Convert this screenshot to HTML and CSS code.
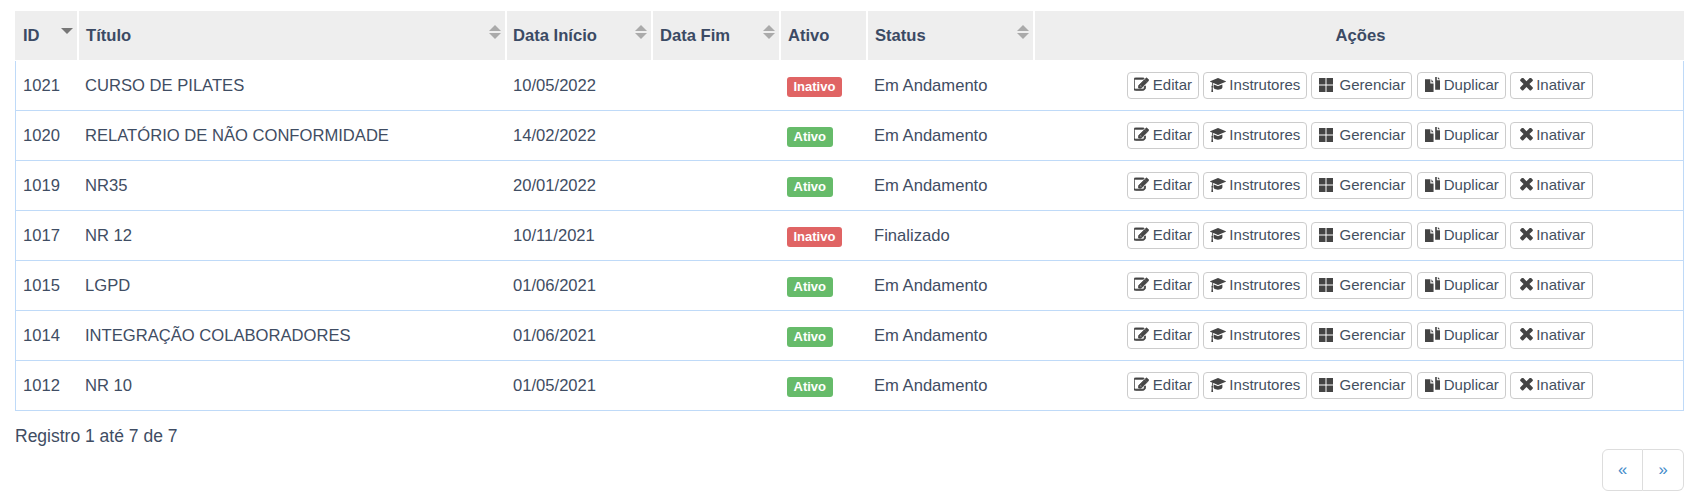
FILE: index.html
```html
<!DOCTYPE html>
<html lang="pt-BR">
<head>
<meta charset="utf-8">
<title>Cursos</title>
<link rel="stylesheet" href="styles.css">
</head>
<body>
<svg class="sprite" xmlns="http://www.w3.org/2000/svg" width="0" height="0">
  <symbol id="i-edit" viewBox="100 150 1720 1440"><path d="M888 1184l116-116-152-152-116 116v56h96v96h56zm440-720q-16-16-33 1l-350 350q-17 17-1 33t33-1l350-350q17-17 1-33zm80 594v190q0 119-84.5 203.5t-203.5 84.5h-832q-119 0-203.5-84.5t-84.5-203.5v-832q0-119 84.5-203.5t203.5-84.5h832q63 0 117 25 15 7 18 23 3 17-9 29l-49 49q-14 14-32 8-23-6-45-6h-832q-66 0-113 47t-47 113v832q0 66 47 113t113 47h832q66 0 113-47t47-113v-126q0-13 9-22l64-64q15-15 35-7t20 29zm-96-738l288 288-672 672h-288v-288zm444 132l-92 92-288-288 92-92q28-28 68-28t68 28l152 152q28 28 28 68t-28 68z" stroke="#444" stroke-width="110"/></symbol>
  <symbol id="i-cap" viewBox="0 128 2304 1536" preserveAspectRatio="none"><path d="M1774 836l18 316q4 69-82 128t-235 93.5-323 34.5-323-34.5-235-93.5-82-128l18-316 574 181q22 7 48 7t48-7zm530-324q0 23-22 31l-1120 352q-4 1-10 1t-10-1l-652-206q-43 34-71 111.5t-34 178.5q63 36 63 109 0 69-58 107l58 433q2 14-8 25-9 11-24 11h-192q-15 0-24-11-10-11-8-25l58-433q-58-38-58-107 0-73 65-111 11-207 98-330l-333-104q-22-8-22-31t22-31l1120-352q4-1 10-1t10 1l1120 352q22 8 22 31z"/></symbol>
  <symbol id="i-grid" viewBox="1 1 14 14"><rect x="1" y="1" width="6.500" height="6.500"/><rect x="8.500" y="1" width="6.500" height="6.500"/><rect x="1" y="8.500" width="6.500" height="6.500"/><rect x="8.500" y="8.500" width="6.500" height="6.500"/></symbol>
  <symbol id="i-copy" viewBox="1 1 14 14"><path d="M1 3h5v4h3v8H1zM7 3l2 3H7zM10.500 1H12v3h3v9h-4.500V6.500L10.500 6zM13 1l2 2h-2z"/></symbol>
  <symbol id="i-x" viewBox="100 320 1208 1136"><path d="M1298 1214q0 40-28 68l-136 136q-28 28-68 28t-68-28l-294-294-294 294q-28 28-68 28t-68-28l-136-136q-28-28-28-68t28-68l294-294-294-294q-28-28-28-68t28-68l136-136q28-28 68-28t68 28l294 294 294-294q28-28 68-28t68 28l136 136q28 28 28 68t-28 68l-294 294 294 294q28 28 28 68z"/></symbol>
</svg>
<main class="page">
<table class="grid">
  <colgroup>
    <col class="c-id"><col class="c-title"><col class="c-start"><col class="c-end"><col class="c-active"><col class="c-status"><col>
  </colgroup>
  <thead>
    <tr>
      <th class="sort-desc">ID</th>
      <th class="sortable">Título</th>
      <th class="sortable">Data Início</th>
      <th class="sortable">Data Fim</th>
      <th>Ativo</th>
      <th class="sortable">Status</th>
      <th class="center">Ações</th>
    </tr>
  </thead>
  <tbody>
    <tr><td>1021</td><td>CURSO DE PILATES</td><td>10/05/2022</td><td></td><td><span class="badge off">Inativo</span></td><td>Em Andamento</td>
      <td class="actions"><a class="btn"><svg class="ic edit"><use href="#i-edit"/></svg> Editar</a> <a class="btn"><svg class="ic cap"><use href="#i-cap"/></svg> Instrutores</a> <a class="btn"><svg class="ic grid-ic"><use href="#i-grid"/></svg> Gerenciar</a> <a class="btn"><svg class="ic copy"><use href="#i-copy"/></svg> Duplicar</a> <a class="btn"><svg class="ic cross"><use href="#i-x"/></svg> Inativar</a></td></tr>
    <tr><td>1020</td><td>RELATÓRIO DE NÃO CONFORMIDADE</td><td>14/02/2022</td><td></td><td><span class="badge on">Ativo</span></td><td>Em Andamento</td>
      <td class="actions"><a class="btn"><svg class="ic edit"><use href="#i-edit"/></svg> Editar</a> <a class="btn"><svg class="ic cap"><use href="#i-cap"/></svg> Instrutores</a> <a class="btn"><svg class="ic grid-ic"><use href="#i-grid"/></svg> Gerenciar</a> <a class="btn"><svg class="ic copy"><use href="#i-copy"/></svg> Duplicar</a> <a class="btn"><svg class="ic cross"><use href="#i-x"/></svg> Inativar</a></td></tr>
    <tr><td>1019</td><td>NR35</td><td>20/01/2022</td><td></td><td><span class="badge on">Ativo</span></td><td>Em Andamento</td>
      <td class="actions"><a class="btn"><svg class="ic edit"><use href="#i-edit"/></svg> Editar</a> <a class="btn"><svg class="ic cap"><use href="#i-cap"/></svg> Instrutores</a> <a class="btn"><svg class="ic grid-ic"><use href="#i-grid"/></svg> Gerenciar</a> <a class="btn"><svg class="ic copy"><use href="#i-copy"/></svg> Duplicar</a> <a class="btn"><svg class="ic cross"><use href="#i-x"/></svg> Inativar</a></td></tr>
    <tr><td>1017</td><td>NR 12</td><td>10/11/2021</td><td></td><td><span class="badge off">Inativo</span></td><td>Finalizado</td>
      <td class="actions"><a class="btn"><svg class="ic edit"><use href="#i-edit"/></svg> Editar</a> <a class="btn"><svg class="ic cap"><use href="#i-cap"/></svg> Instrutores</a> <a class="btn"><svg class="ic grid-ic"><use href="#i-grid"/></svg> Gerenciar</a> <a class="btn"><svg class="ic copy"><use href="#i-copy"/></svg> Duplicar</a> <a class="btn"><svg class="ic cross"><use href="#i-x"/></svg> Inativar</a></td></tr>
    <tr><td>1015</td><td>LGPD</td><td>01/06/2021</td><td></td><td><span class="badge on">Ativo</span></td><td>Em Andamento</td>
      <td class="actions"><a class="btn"><svg class="ic edit"><use href="#i-edit"/></svg> Editar</a> <a class="btn"><svg class="ic cap"><use href="#i-cap"/></svg> Instrutores</a> <a class="btn"><svg class="ic grid-ic"><use href="#i-grid"/></svg> Gerenciar</a> <a class="btn"><svg class="ic copy"><use href="#i-copy"/></svg> Duplicar</a> <a class="btn"><svg class="ic cross"><use href="#i-x"/></svg> Inativar</a></td></tr>
    <tr><td>1014</td><td>INTEGRAÇÃO COLABORADORES</td><td>01/06/2021</td><td></td><td><span class="badge on">Ativo</span></td><td>Em Andamento</td>
      <td class="actions"><a class="btn"><svg class="ic edit"><use href="#i-edit"/></svg> Editar</a> <a class="btn"><svg class="ic cap"><use href="#i-cap"/></svg> Instrutores</a> <a class="btn"><svg class="ic grid-ic"><use href="#i-grid"/></svg> Gerenciar</a> <a class="btn"><svg class="ic copy"><use href="#i-copy"/></svg> Duplicar</a> <a class="btn"><svg class="ic cross"><use href="#i-x"/></svg> Inativar</a></td></tr>
    <tr><td>1012</td><td>NR 10</td><td>01/05/2021</td><td></td><td><span class="badge on">Ativo</span></td><td>Em Andamento</td>
      <td class="actions"><a class="btn"><svg class="ic edit"><use href="#i-edit"/></svg> Editar</a> <a class="btn"><svg class="ic cap"><use href="#i-cap"/></svg> Instrutores</a> <a class="btn"><svg class="ic grid-ic"><use href="#i-grid"/></svg> Gerenciar</a> <a class="btn"><svg class="ic copy"><use href="#i-copy"/></svg> Duplicar</a> <a class="btn"><svg class="ic cross"><use href="#i-x"/></svg> Inativar</a></td></tr>
  </tbody>
</table>
<p class="info">Registro 1 até 7 de 7</p>
<nav class="pager"><a>«</a><a>»</a></nav>
</main>
</body>
</html>
```

FILE: styles.css
```css
* { box-sizing: border-box; }
html, body { margin: 0; background: #fff; }
body { font-family: "Liberation Sans", Arial, sans-serif; font-size: 16.6px; color: #3f4d63; }
.sprite { position: absolute; }
.page { padding: 11px 8px 0 15px; }
.grid { width: 100%; table-layout: fixed; border-collapse: separate; border-spacing: 0; }
.c-id { width: 64px; }
.c-title { width: 428px; }
.c-start { width: 146px; }
.c-end { width: 128px; }
.c-active { width: 87px; }
.c-status { width: 167px; }
.grid th { height: 50px; padding: 0 7px; background: #eee; border-right: 2px solid #fff; border-bottom: 1px solid #fff; text-align: left; font-size: 16.6px; font-weight: 700; color: #3b4a64; position: relative; }
.grid th:first-child { padding-left: 8px; }
.grid th:nth-child(3) { padding-left: 6px; }
.grid th:last-child { border-right: 0; }
.grid th.center { text-align: center; padding-left: 9px; }
.grid td { height: 50px; padding: 1px 6px 0; border-bottom: 1px solid #bfdaf8; }
.grid td:first-child { padding-left: 7px; border-left: 1px solid #bfdaf8; }
.grid td:last-child { border-right: 1px solid #bfdaf8; }
.sortable::before, .sortable::after, .sort-desc::after { content: ""; position: absolute; right: 4px; width: 0; height: 0; border-left: 6px solid transparent; border-right: 6px solid transparent; }
.sortable::before { top: 14px; border-bottom: 6px solid #aaa; }
.sortable::after { top: 22px; border-top: 6px solid #aaa; }
.sort-desc::after { top: 17px; border-top: 6px solid #777; }
.badge { display: inline-block; height: 20px; margin-top: 1px; padding: 0 6.500px; line-height: 20px; border-radius: 3px; font-size: 13px; font-weight: 700; color: #fff; vertical-align: middle; }
.badge.on { background: #66bb6a; }
.badge.off { background: #e06464; }
.actions { text-align: center; white-space: nowrap; font-size: 15px; }
.grid td.actions { padding: 0 0 0 2px; }
.btn { display: inline-block; height: 27px; padding: 0 6px; line-height: 24px; border: 1px solid #ccc; border-radius: 4px; background: #fff; font-size: 15px; color: #444f5f; vertical-align: middle; }
.ic { width: 15px; height: 15px; fill: #444; vertical-align: -2px; }
.ic.edit { width: 15px; }
.ic.cap { width: 16px; height: 14px; margin-right: -1px; }
.ic.grid-ic { width: 14px; height: 14px; margin-left: 1px; margin-right: 2px; }
.ic.copy { width: 15px; margin-left: 1px; }
.ic.cross { width: 13px; height: 13px; margin-left: 3px; margin-right: -1px; vertical-align: -1px; }
.btn:last-child { padding-right: 7px; }
.info { margin: 15px 0 0; line-height: 20px; font-size: 17.5px; }
.pager { display: flex; justify-content: flex-end; margin-top: 3px; }
.pager a { width: 41px; height: 42px; display: flex; align-items: center; justify-content: center; border: 1px solid #ddd; color: #428bca; font-size: 16.6px; }
.pager a:first-child { border-radius: 6px 0 0 6px; }
.pager a:last-child { border-left: 0; border-radius: 0 6px 6px 0; }
```
